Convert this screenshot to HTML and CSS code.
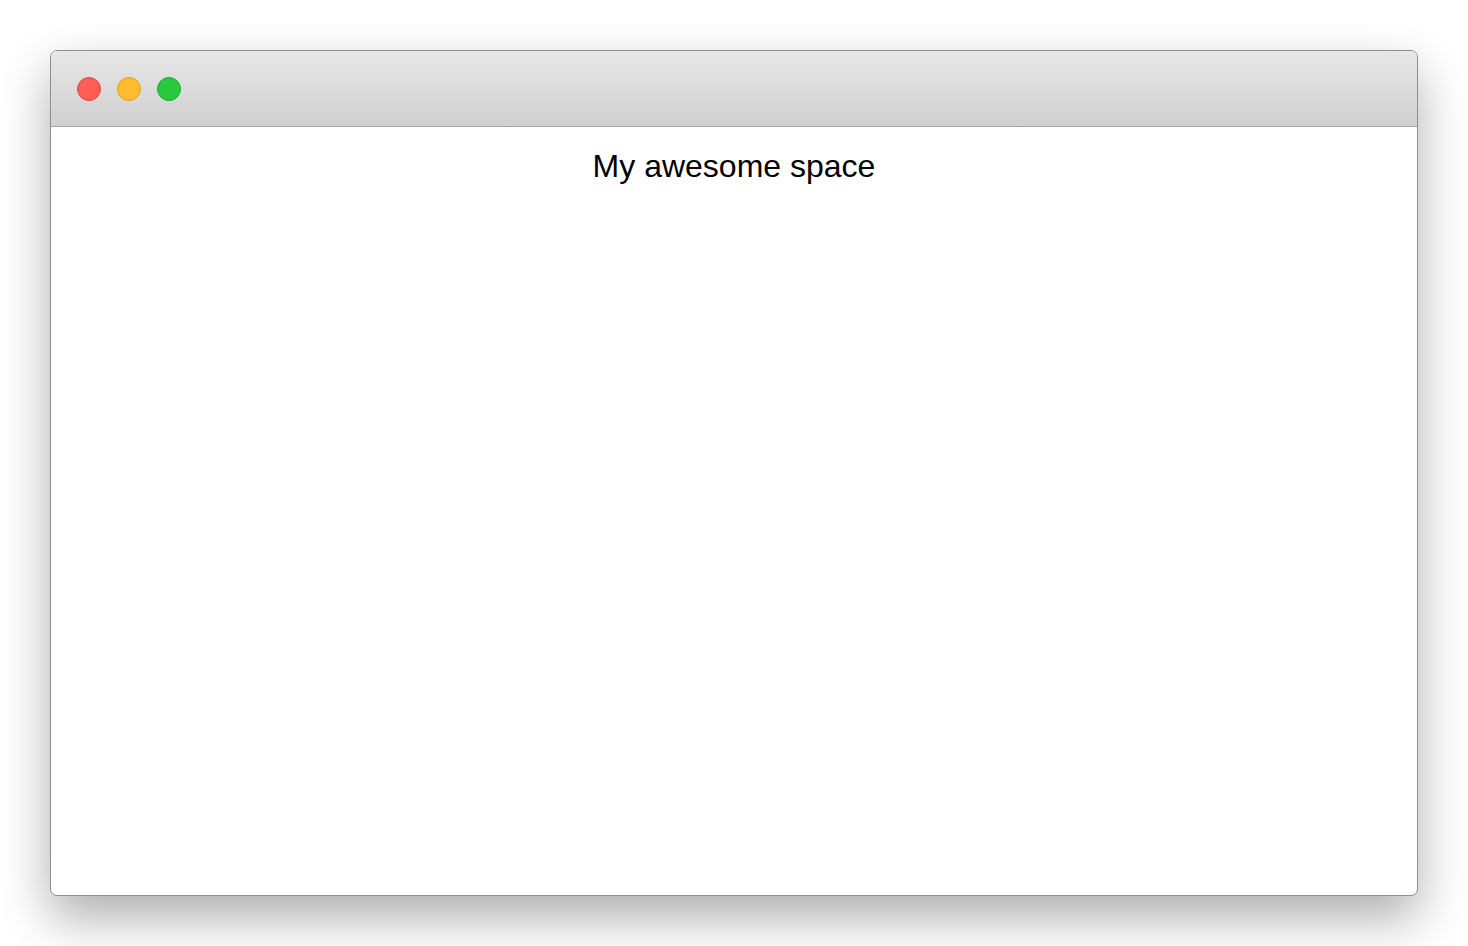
FILE: index.html
```html
<!DOCTYPE html>
<html>
<head>
<meta charset="utf-8">
<link rel="stylesheet" href="styles.css">
</head>
<body>
<div class="window">
  <div class="titlebar">
    <span class="light red"></span>
    <span class="light yellow"></span>
    <span class="light green"></span>
  </div>
  <div class="content">
    <h1 class="title">My awesome space</h1>
  </div>
</div>
</body>
</html>
```
FILE: styles.css
```css
html, body {
  margin: 0;
  padding: 0;
  background: #ffffff;
}
body {
  padding: 50px;
  font-family: "Liberation Sans", Arial, sans-serif;
}
.window {
  box-sizing: border-box;
  width: 1368px;
  height: 846px;
  border: 1px solid #8e8e8e;
  border-radius: 7px;
  background: #ffffff;
  overflow: hidden;
  box-shadow: 0 22px 50px rgba(0, 0, 0, 0.32);
  display: flex;
  flex-direction: column;
}
.titlebar {
  height: 75px;
  flex: none;
  background: linear-gradient(to bottom, #e7e7e7, #d0d0d0);
  border-bottom: 1px solid #a6a6a6;
  display: flex;
  align-items: center;
  gap: 16px;
  padding-left: 26px;
}
.light {
  box-sizing: border-box;
  width: 24px;
  height: 24px;
  border-radius: 50%;
}
.red { background: #ff5f57; border: 1px solid #e2463f; }
.yellow { background: #ffbd2e; border: 1px solid #e1a116; }
.green { background: #28c940; border: 1px solid #14ae2a; }
.content {
  flex: 1;
}
.title {
  margin: 21px 0 0;
  font-size: 32px;
  font-weight: normal;
  text-align: center;
  color: #000;
}
```
